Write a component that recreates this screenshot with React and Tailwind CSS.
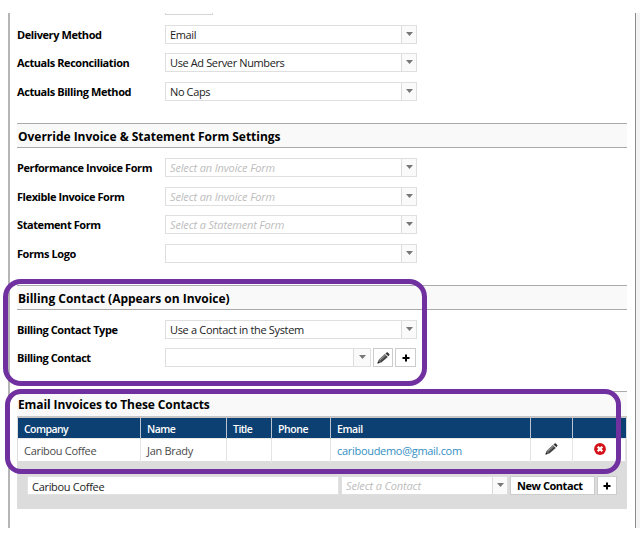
import React from "react";

function Arrow({ width = "w-[15px]" }) {
  return (
    <span className={`flex h-full shrink-0 justify-center border-l border-[#dcdcdc] bg-[#fafafa] pt-[6px] ${width}`}>
      <svg width="7" height="4" viewBox="0 0 7 4">
        <path d="M0 0H7L3.5 4Z" fill="#777" />
      </svg>
    </span>
  );
}

function Select({ value, placeholder, width = "w-[252px]", arrow, track = "tracking-[-0.38px]" }) {
  return (
    <div className={`flex h-[19px] shrink-0 border border-[#dfdfdf] bg-white ${width}`}>
      <div className="flex-1 whitespace-nowrap pl-1 text-[11px] leading-[18px]">
        {value ? (
          <span className={`text-[#222] ${track}`}>{value}</span>
        ) : (
          <span className="italic tracking-[-0.15px] text-[#bdbdbd]">{placeholder}</span>
        )}
      </div>
      <Arrow width={arrow} />
    </div>
  );
}

function Row({ label, height = "h-[28px]", children }) {
  return (
    <div className={`flex items-start ${height}`}>
      <div className="w-[148px] shrink-0 whitespace-nowrap text-[11px] font-bold leading-[19px] tracking-[-0.42px] text-black">
        {label}
      </div>
      {children}
    </div>
  );
}

function Heading({ children, last }) {
  return (
    <div
      className={`h-[25px] whitespace-nowrap border-t border-t-[#aaa] bg-[#f9f9f9] pl-[1px] text-[12px] font-bold leading-[25px] text-black ${
        last ? "tracking-[-0.1px]" : "border-b border-b-[#aaa] tracking-[-0.02px]"
      }`}
    >
      {children}
    </div>
  );
}

function Pencil() {
  return (
    <svg width="13" height="12" viewBox="0 0 13 12">
      <path d="M.5 11.6L1.5 7.9L7.8 2.1L10.9 4.9L4.4 10.6Z" fill="#5c5c5c" />
      <path d="M8.4 1.5L9.7 .4Q10.2 0 10.8 .5L12.3 1.9Q12.8 2.5 12.3 3L11.5 4.2Z" fill="#333" />
      <path d="M2.7 8.2L8.5 3" stroke="#aaa" strokeWidth=".8" />
      <path d="M4 9.6L9.8 4.4" stroke="#333" strokeWidth="1" />
      <path d="M.5 11.6L1 9.6L2.5 11.1Z" fill="#111" />
    </svg>
  );
}

function Plus() {
  return (
    <svg width="8" height="8" viewBox="0 0 8 8">
      <path d="M4 .5V7.5M.5 4H7.5" stroke="#000" strokeWidth="2" />
    </svg>
  );
}

function Remove() {
  return (
    <svg width="12" height="12" viewBox="0 0 12 12">
      <circle cx="6" cy="6" r="5.9" fill="#d3121a" />
      <path d="M3.7 3.7L8.3 8.3M8.3 3.7L3.7 8.3" stroke="#fff" strokeWidth="2.3" />
    </svg>
  );
}

const columns = "grid grid-cols-[123px_86px_45px_59px_200px_42px_53px]";

export default function App() {
  return (
    <div className="relative h-[540px] w-[644px] overflow-hidden bg-white pt-[13px] font-['Open_Sans','Noto_Sans',sans-serif]">
      <div className="flex h-[515px]">
        <div className="ml-2 w-[628px] border-l-2 border-r border-l-[#b5b5b5] border-r-[#8c8c8c] pl-[7px] pr-[8px]">
          <div className="ml-[148px] h-[2px] w-[48px] border-x border-b border-[#d5d5d5]" />
          <div className="h-[10px]" />
          <Row label="Delivery Method"><Select value="Email" /></Row>
          <Row label="Actuals Reconciliation" height="h-[29px]"><Select value="Use Ad Server Numbers" /></Row>
          <Row label="Actuals Billing Method" height="h-[41px]"><Select value="No Caps" /></Row>
          <Heading>Override Invoice &amp; Statement Form Settings</Heading>
          <div className="h-[10px]" />
          <Row label="Performance Invoice Form" height="h-[29px]"><Select placeholder="Select an Invoice Form" /></Row>
          <Row label="Flexible Invoice Form"><Select placeholder="Select an Invoice Form" /></Row>
          <Row label="Statement Form" height="h-[29px]"><Select placeholder="Select a Statement Form" /></Row>
          <Row label="Forms Logo" height="h-[41px]"><Select /></Row>
          <Heading>Billing Contact (Appears on Invoice)</Heading>
          <div className="h-[10px]" />
          <Row label="Billing Contact Type" height="h-[28px]"><Select value="Use a Contact in the System" track="tracking-[-0.33px]" /></Row>
          <Row label="Billing Contact" height="h-[43px]">
            <Select width="w-[206px]" arrow="w-[17px]" />
            <span className="ml-[2px] flex h-[19px] w-[20px] items-center justify-center border border-[#ccc]"><Pencil /></span>
            <span className="ml-[2px] flex h-[19px] w-[21px] items-center justify-center border border-[#ccc]"><Plus /></span>
          </Row>
          <Heading last>Email Invoices to These Contacts</Heading>
          <div className="h-[93px] bg-[#dcdcdc]">
            <div className="h-[2px] bg-[#c6c6c6]" />
            <div className={`${columns} mx-[1px] h-[20px] bg-[#0d4072] text-[10.5px] font-semibold leading-[22px] tracking-[-0.55px] text-white [&>*]:whitespace-nowrap [&>*]:border-r [&>*]:border-[#b9c4d0] [&>*]:pl-[6px] [&>*:last-child]:border-r-0`}>
              <div>Company</div><div>Name</div><div>Title</div><div className="tracking-[-0.4px]">Phone</div><div className="tracking-[-0.4px]">Email</div><div /><div />
            </div>
            <div className={`${columns} mx-[1px] h-[23px] border-t border-[#e8e8e8] bg-white text-[11px] leading-[24px] tracking-[-0.3px] text-[#4a4a4a] [&>*]:whitespace-nowrap [&>*]:border-r [&>*]:border-[#e4e4e4] [&>*]:pl-[6px]`}>
              <div>Caribou Coffee</div>
              <div>Jan Brady</div>
              <div />
              <div />
              <div className="text-[#338fc4]">cariboudemo@gmail.com</div>
              <div className="flex pt-[4px]"><span className="ml-[8px]"><Pencil /></span></div>
              <div className="flex pt-[4px]"><span className="ml-[15px]"><Remove /></span></div>
            </div>
            <div className="flex pl-[10px] pt-[15px]">
              <div className="mr-[2px] h-[19px] w-[312px] border border-[#e2e2e2] bg-white pl-[4px] text-[11px] leading-[20px] tracking-[-0.3px] text-[#222]">Caribou Coffee</div>
              <Select width="w-[167px]" placeholder="Select a Contact" />
              <div className="ml-[2px] h-[19px] w-[85px] whitespace-nowrap border border-[#ccc] bg-white pl-[6px] text-[11px] font-bold leading-[17px] tracking-[-0.45px]">New Contact</div>
              <span className="ml-[2px] flex h-[19px] w-[20px] items-center justify-center border border-[#ccc] bg-white"><Plus /></span>
            </div>
          </div>
        </div>
        <div className="w-[4px] bg-[#f3f3f3]" />
      </div>
      <div className="absolute left-[3px] top-[279px] h-[107px] w-[424px] rounded-[18px] border-[5px] border-[#7030a0]" />
      <div className="absolute left-[5px] top-[389px] h-[85px] w-[616px] rounded-[16px] border-[5px] border-[#7030a0]" />
    </div>
  );
}
